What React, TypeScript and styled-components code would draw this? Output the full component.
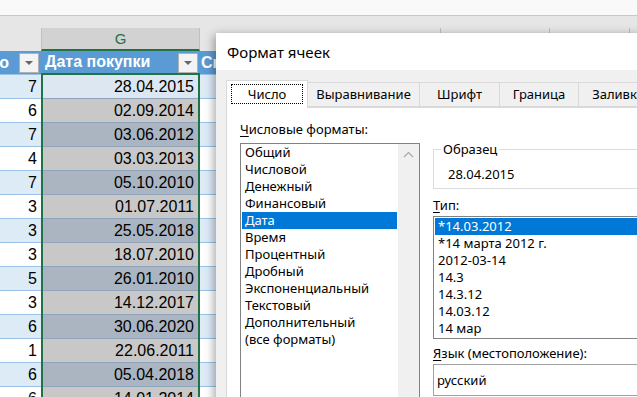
import React from 'react';
import styled, { createGlobalStyle } from 'styled-components';

const GlobalStyle = createGlobalStyle`
  html, body {
    margin: 0;
    padding: 0;
    background: #ffffff;
  }
  body {
    overflow: hidden;
  }
  * {
    box-sizing: border-box;
  }
`;

const SHEET_FONT = `"Liberation Sans", Arial, sans-serif`;
const UI_FONT = `"Noto Sans", "Open Sans", sans-serif`;

const counts = [7, 6, 7, 4, 7, 3, 3, 3, 5, 3, 6, 1, 6, 6];
const dates = [
  '28.04.2015', '02.09.2014', '03.06.2012', '03.03.2013', '05.10.2010',
  '01.07.2011', '25.05.2018', '18.07.2010', '26.01.2010', '14.12.2017',
  '30.06.2020', '22.06.2011', '05.04.2018', '14.01.2014',
];

const categories = [
  'Общий', 'Числовой', 'Денежный', 'Финансовый', 'Дата', 'Время', 'Процентный',
  'Дробный', 'Экспоненциальный', 'Текстовый', 'Дополнительный', '(все форматы)',
];

const types = ['*14.03.2012', '*14 марта 2012 г.', '2012-03-14', '14.3', '14.3.12', '14.03.12', '14 мар'];

const tabs = [
  { label: 'Число', width: 82 },
  { label: 'Выравнивание', width: 113 },
  { label: 'Шрифт', width: 81 },
  { label: 'Граница', width: 80 },
  { label: 'Заливка', width: 80 },
];

// column letters hidden behind the dialog, only their separators peek out
const backColumns = [224, 109, 80, 60];

/* ---------- sheet ---------- */

const Screen = styled.div`
  position: relative;
  width: 637px;
  height: 397px;
  overflow: hidden;
  background: #ffffff;
  font-family: ${SHEET_FONT};
`;

const TopStrip = styled.div`
  height: 16px;
  background: #f9f9f9;
  border-bottom: 1px solid #c8c8c8;
`;

const HeadGap = styled.div`
  height: 12px;
  background: #e6e6e6;
`;

const Columns = styled.div`
  display: flex;
  align-items: flex-start;
`;

const Column = styled.div<{ $width: number }>`
  display: flex;
  flex-direction: column;
  width: ${p => p.$width}px;
  flex: 0 0 auto;
  min-width: 0;
  overflow: hidden;
`;

const BackLetters = styled.div`
  display: flex;
  flex: 0 0 auto;
`;

const Letter = styled.div<{ $active?: boolean; $sep?: boolean; $width?: number }>`
  height: 23px;
  width: ${p => (p.$width ? `${p.$width}px` : 'auto')};
  display: flex;
  align-items: center;
  justify-content: center;
  font-size: 15px;
  color: #217346;
  background: ${p => (p.$active ? '#d2d2d2' : '#e6e6e6')};
  border-left: ${p => (p.$active || p.$sep ? '1px solid #c0c0c0' : 'none')};
  border-right: ${p => (p.$active ? '1px solid #c0c0c0' : 'none')};
  border-bottom: 2px solid ${p => (p.$active ? '#217346' : '#e6e6e6')};
`;

const TableHead = styled.div<{ $align?: 'start' | 'end'; $short?: boolean; $pad?: number }>`
  height: ${p => (p.$short ? 22 : 24)}px;
  background: #5b9bd5;
  color: #ffffff;
  font-weight: bold;
  font-size: 16px;
  display: flex;
  align-items: center;
  justify-content: ${p => (p.$align === 'end' ? 'flex-end' : 'flex-start')};
  padding: 0 2px 0 ${p => p.$pad ?? 4}px;
  overflow: hidden;
  white-space: nowrap;
  border-bottom: ${p => (p.$short ? 'none' : '1px solid #9bc2e6')};
`;

const HeadText = styled.span`
  flex: 1 0 auto;
`;

const FilterButton = styled.span`
  flex: 0 0 auto;
  width: 20px;
  height: 20px;
  margin-left: 10px;
  margin-top: 1px;
  background: #f3f3f3;
  border: 1px solid #b1b1b1;
  display: flex;
  align-items: center;
  justify-content: center;
  &::after {
    content: '';
    width: 0;
    height: 0;
    border-left: 4px solid transparent;
    border-right: 4px solid transparent;
    border-top: 4px solid #666666;
  }
`;

const Selection = styled.div`
  border: 2px solid #217346;
  border-bottom: none;
`;

type Tone = 'blue' | 'white' | 'active' | 'selBlue' | 'selWhite';

const toneBg: Record<Tone, string> = {
  blue: '#ddebf7',
  white: '#ffffff',
  active: '#dde7f1',
  selBlue: '#aab5c1',
  selWhite: '#c8c8c8',
};

const Cell = styled.div<{ $tone: Tone }>`
  height: 24px;
  padding: 1px 4px 0 4px;
  display: flex;
  align-items: center;
  justify-content: flex-end;
  font-size: 16px;
  color: #000000;
  white-space: nowrap;
  background: ${p => toneBg[p.$tone]};
  border-bottom: 1px solid
    ${p => (p.$tone === 'blue' || p.$tone === 'white' ? '#9bc2e6' : '#8ea4bd')};
`;

/* ---------- dialog ---------- */

const Dialog = styled.div`
  position: absolute;
  left: 216px;
  top: 33px;
  width: 470px;
  height: 390px;
  background: #f0f0f0;
  box-shadow: -2px 2px 9px rgba(0, 0, 0, 0.35);
  font-family: ${UI_FONT};
  color: #000000;
  display: flex;
  flex-direction: column;
`;

const TitleBar = styled.div`
  height: 37px;
  flex: 0 0 auto;
  background: #ffffff;
  display: flex;
  align-items: center;
  padding-left: 11px;
  font-size: 15px;
`;

const Body = styled.div`
  flex: 1;
  padding: 10px 0 0 10px;
  display: flex;
  flex-direction: column;
`;

const TabStrip = styled.div`
  display: flex;
  align-items: flex-end;
  height: 27px;
  position: relative;
  z-index: 1;
`;

const Tab = styled.div<{ $active?: boolean; $width: number }>`
  width: ${p => p.$width}px;
  height: ${p => (p.$active ? 28 : 25)}px;
  margin-left: -1px;
  margin-bottom: ${p => (p.$active ? -1 : 0)}px;
  background: ${p => (p.$active ? '#ffffff' : '#f0f0f0')};
  border: 1px solid #d9d9d9;
  border-bottom: ${p => (p.$active ? 'none' : '1px solid #d9d9d9')};
  font-size: 13px;
  display: flex;
  padding: 3px 4px 4px 4px;
  &:first-child {
    margin-left: 0;
  }
`;

const TabLabel = styled.span<{ $focus?: boolean }>`
  flex: 1;
  display: flex;
  align-items: center;
  justify-content: center;
  border: 1px dotted ${p => (p.$focus ? '#000000' : 'transparent')};
  white-space: nowrap;
`;

const Page = styled.div`
  flex: 1;
  background: #ffffff;
  border: 1px solid #d9d9d9;
  display: flex;
  gap: 13px;
  padding: 13px 0 0 13px;
  font-size: 13px;
  line-height: 17px;
`;

const LeftPane = styled.div`
  width: 180px;
  flex: 0 0 auto;
  display: flex;
  flex-direction: column;
`;

const RightPane = styled.div`
  flex: 1;
  display: flex;
  flex-direction: column;
  min-width: 0;
`;

const Label = styled.div<{ $gap?: number }>`
  margin-top: ${p => p.$gap ?? 0}px;
  white-space: nowrap;
  u {
    text-decoration-thickness: 1px;
    text-underline-offset: 2px;
  }
`;

const ListBox = styled.div<{ $height: number; $gap?: number }>`
  display: flex;
  height: ${p => p.$height}px;
  margin-top: ${p => p.$gap ?? 0}px;
  border: 1px solid #828282;
  background: #ffffff;
  flex: 0 0 auto;
`;

const Items = styled.div<{ $padTop?: number }>`
  flex: 1;
  padding-top: ${p => p.$padTop ?? 0}px;
  min-width: 0;
`;

const Item = styled.div<{ $selected?: boolean }>`
  height: 17px;
  line-height: 17px;
  margin: 0 1px;
  padding-left: 3px;
  white-space: nowrap;
  background: ${p => (p.$selected ? '#0078d7' : 'transparent')};
  color: ${p => (p.$selected ? '#ffffff' : '#000000')};
`;

const ScrollBar = styled.div`
  width: 21px;
  flex: 0 0 auto;
  background: #f0f0f0;
  display: flex;
  justify-content: center;
  padding-top: 7px;
`;

const Sample = styled.fieldset`
  margin: 20px 0 0 0;
  padding: 8px 0 5px 0;
  border: 1px solid #dcdcdc;
  min-width: 0;
  line-height: 17px;
`;

const Legend = styled.legend`
  margin-left: 7px;
  padding: 0 2px;
  font-size: 13px;
  line-height: 17px;
`;

const SampleValue = styled.div`
  padding-left: 14px;
`;

const ComboBox = styled.div`
  height: 32px;
  margin-top: 2px;
  border: 1px solid #a0a0a0;
  background: #ffffff;
  display: flex;
  align-items: center;
  padding-left: 3px;
`;

const ChevronUp = () => (
  <svg width="11" height="7" viewBox="0 0 11 7">
    <path d="M1 6 L5.5 1.5 L10 6" fill="none" stroke="#a6a6a6" strokeWidth="1.2" />
  </svg>
);

const App: React.FC = () => {
  return (
    <Screen>
      <GlobalStyle />
      <TopStrip />
      <HeadGap />
      <Columns>
        <Column $width={41}>
          <Letter />
          <TableHead $align="end">
            <HeadText>Количество</HeadText>
            <FilterButton />
          </TableHead>
          {counts.map((n, i) => (
            <Cell key={i} $tone={i % 2 === 0 ? 'blue' : 'white'}>
              {n}
            </Cell>
          ))}
        </Column>
        <Column $width={159}>
          <Letter $active>G</Letter>
          <TableHead $short>
            <HeadText>Дата покупки</HeadText>
            <FilterButton />
          </TableHead>
          <Selection>
            {dates.map((d, i) => (
              <Cell key={d} $tone={i === 0 ? 'active' : i % 2 === 0 ? 'selBlue' : 'selWhite'}>
                {d}
              </Cell>
            ))}
          </Selection>
        </Column>
        <Column $width={16}>
          <Letter />
          <TableHead $pad={1}>
            <HeadText>Ск</HeadText>
          </TableHead>
          {counts.map((_, i) => (
            <Cell key={i} $tone={i % 2 === 0 ? 'blue' : 'white'} />
          ))}
        </Column>
        <BackLetters>
          {backColumns.map((w, i) => (
            <Letter key={i} $width={w} $sep={i > 0} />
          ))}
        </BackLetters>
      </Columns>

      <Dialog>
        <TitleBar>Формат ячеек</TitleBar>
        <Body>
          <TabStrip>
            {tabs.map((t, i) => (
              <Tab key={t.label} $active={i === 0} $width={t.width}>
                <TabLabel $focus={i === 0}>{t.label}</TabLabel>
              </Tab>
            ))}
          </TabStrip>
          <Page>
            <LeftPane>
              <Label>
                <u>Ч</u>исловые форматы:
              </Label>
              <ListBox $height={270} $gap={5}>
                <Items>
                  {categories.map(c => (
                    <Item key={c} $selected={c === 'Дата'}>
                      {c}
                    </Item>
                  ))}
                </Items>
                <ScrollBar>
                  <ChevronUp />
                </ScrollBar>
              </ListBox>
            </LeftPane>
            <RightPane>
              <Sample>
                <Legend>Образец</Legend>
                <SampleValue>28.04.2015</SampleValue>
              </Sample>
              <Label $gap={8}>
                <u>Т</u>ип:
              </Label>
              <ListBox $height={123} $gap={2}>
                <Items $padTop={1}>
                  {types.map((t, i) => (
                    <Item key={t} $selected={i === 0}>
                      {t}
                    </Item>
                  ))}
                </Items>
              </ListBox>
              <Label $gap={6}>
                <u>Я</u>зык (местоположение):
              </Label>
              <ComboBox>русский</ComboBox>
            </RightPane>
          </Page>
        </Body>
      </Dialog>
    </Screen>
  );
};

export default App;
